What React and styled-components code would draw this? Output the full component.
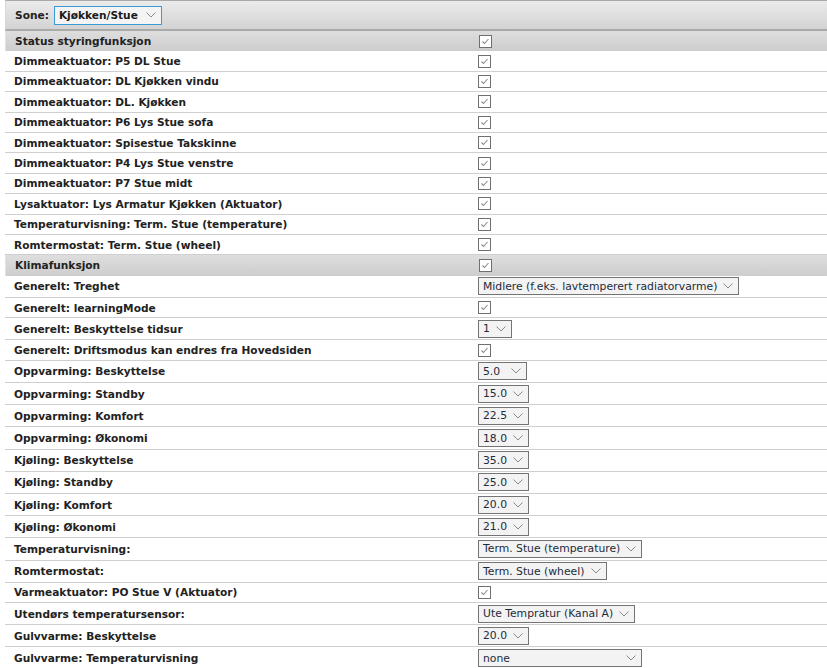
import React from "react";
import styled, { createGlobalStyle } from "styled-components";

const GlobalStyle = createGlobalStyle`
  body {
    margin: 0;
    background: #ffffff;
    font-family: "DejaVu Sans", Verdana, sans-serif;
  }
`;

const statusRows = [
  "Dimmeaktuator: P5 DL Stue",
  "Dimmeaktuator: DL Kjøkken vindu",
  "Dimmeaktuator: DL. Kjøkken",
  "Dimmeaktuator: P6 Lys Stue sofa",
  "Dimmeaktuator: Spisestue Takskinne",
  "Dimmeaktuator: P4 Lys Stue venstre",
  "Dimmeaktuator: P7 Stue midt",
  "Lysaktuator: Lys Armatur Kjøkken (Aktuator)",
  "Temperaturvisning: Term. Stue (temperature)",
  "Romtermostat: Term. Stue (wheel)",
];

const klimaRows = [
  { label: "Generelt: Treghet", select: "Midlere (f.eks. lavtemperert radiatorvarme)" },
  { label: "Generelt: learningMode" },
  { label: "Generelt: Beskyttelse tidsur", select: "1", width: 31 },
  { label: "Generelt: Driftsmodus kan endres fra Hovedsiden" },
  { label: "Oppvarming: Beskyttelse", select: "5.0", width: 49 },
  { label: "Oppvarming: Standby", select: "15.0", width: 49 },
  { label: "Oppvarming: Komfort", select: "22.5", width: 49 },
  { label: "Oppvarming: Økonomi", select: "18.0", width: 49 },
  { label: "Kjøling: Beskyttelse", select: "35.0", width: 49 },
  { label: "Kjøling: Standby", select: "25.0", width: 49 },
  { label: "Kjøling: Komfort", select: "20.0", width: 49 },
  { label: "Kjøling: Økonomi", select: "21.0", width: 49 },
  { label: "Temperaturvisning:", select: "Term. Stue (temperature)", width: 164 },
  { label: "Romtermostat:", select: "Term. Stue (wheel)", width: 129 },
  { label: "Varmeaktuator: PO Stue V (Aktuator)" },
  { label: "Utendørs temperatursensor:", select: "Ute Tempratur (Kanal A)", width: 157 },
  { label: "Gulvvarme: Beskyttelse", select: "20.0", width: 49 },
  { label: "Gulvvarme: Temperaturvisning", select: "none", width: 164 },
];

const Chevron = () => (
  <ChevronSvg viewBox="0 0 10 6">
    <path d="M0.5 0.5 L5 5 L9.5 0.5" fill="none" stroke="#8a8a8a" strokeWidth="1" />
  </ChevronSvg>
);

const Check = () => (
  <CheckBox>
    <svg width="11" height="11" viewBox="0 0 11 11">
      <path d="M2.5 5.5 L4.5 7.5 L8.5 3" fill="none" stroke="#8c8c8c" strokeWidth="1.1" />
    </svg>
  </CheckBox>
);

const Dropdown = ({ value, width }) => (
  <SelectBox $min={width}>
    <span>{value}</span>
    <Chevron />
  </SelectBox>
);

const App = () => {
  return (
    <>
      <GlobalStyle />
      <Page>
        <ZoneBar>
          <ZoneLabel>Sone:</ZoneLabel>
          <ZoneSelect>
            <span>Kjøkken/Stue</span>
            <Chevron />
          </ZoneSelect>
        </ZoneBar>

        <SectionRow>
          <Label>Status styringfunksjon</Label>
          <Value>
            <Check />
          </Value>
        </SectionRow>
        {statusRows.map((r) => (
          <Row key={r}>
            <Label>{r}</Label>
            <Value>
              <Check />
            </Value>
          </Row>
        ))}

        <SectionRow>
          <Label>Klimafunksjon</Label>
          <Value>
            <Check />
          </Value>
        </SectionRow>
        {klimaRows.map((r) => (
          <Row key={r.label} $tall={!!r.select}>
            <Label>{r.label}</Label>
            <Value>
              {r.select ? <Dropdown value={r.select} width={r.width} /> : <Check />}
            </Value>
          </Row>
        ))}
      </Page>
    </>
  );
};

const Page = styled.div`
  padding-left: 5px;
  font-size: 10.6px;
  color: #222;
`;

const ZoneBar = styled.div`
  display: flex;
  align-items: center;
  gap: 5px;
  height: 31px;
  padding-left: 9px;
  border-top: 1px solid #a8a8a8;
  border-left: 1px solid #d8d8d8;
  border-bottom: 2px solid #a9a9a9;
  background: linear-gradient(#ebebeb, #d3d3d3);
  box-sizing: border-box;
`;

const ZoneLabel = styled.span`
  font-weight: bold;
`;

const ZoneSelect = styled.div`
  display: flex;
  align-items: center;
  justify-content: space-between;
  width: 108px;
  height: 19px;
  box-sizing: border-box;
  padding: 0 5px 0 4px;
  border: 1px solid #3b9ad9;
  background: #f4f4f4;
  font-weight: bold;
  color: #1a1a1a;
`;

const Row = styled.div`
  display: flex;
  align-items: center;
  height: ${(p) => (p.$tall ? "22.2px" : "20.4px")};
  border-bottom: 1px solid #cfcfcf;
  box-sizing: border-box;
`;

const SectionRow = styled(Row)`
  height: 20.4px;
  border-left: 1px solid #e2e2e2;
  border-bottom: none;
  background: linear-gradient(#dedede, #cdcdcd);
`;

const Label = styled.div`
  width: 473px;
  flex-shrink: 0;
  padding-left: 9px;
  box-sizing: border-box;
  font-weight: bold;
  white-space: nowrap;
`;

const Value = styled.div`
  display: flex;
  align-items: center;
`;

const CheckBox = styled.span`
  display: flex;
  align-items: center;
  justify-content: center;
  width: 13px;
  height: 13px;
  box-sizing: border-box;
  border: 1px solid #6f6f6f;
  background: #ffffff;
`;

const SelectBox = styled.div`
  display: flex;
  align-items: center;
  justify-content: space-between;
  min-width: ${(p) => (p.$min ? `${p.$min}px` : "0")};
  height: 18px;
  box-sizing: border-box;
  padding: 0 5px 0 4px;
  border: 1px solid #747474;
  background: #f3f3f3;
  font-size: 10.8px;
  color: #1d2b3a;
  white-space: nowrap;
`;

const ChevronSvg = styled.svg`
  width: 10px;
  height: 6px;
  flex-shrink: 0;
  margin-left: 6px;
`;

export default App;
